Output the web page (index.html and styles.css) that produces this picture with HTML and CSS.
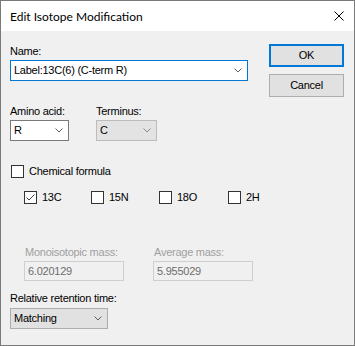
FILE: index.html
```html
<!DOCTYPE html>
<html>
<head>
<meta charset="utf-8">
<link rel="stylesheet" href="styles.css">
</head>
<body>
<div class="window">
  <div class="titlebar">
    <span class="title">Edit Isotope Modification</span>
    <svg class="close" width="10" height="10" viewBox="0 0 10 10"><path d="M0.5 0.5 L9.5 9.5 M9.5 0.5 L0.5 9.5" stroke="#000" stroke-width="1" fill="none"/></svg>
  </div>
  <div class="client">
    <div class="main">
      <div class="lbl name-lbl">Name:</div>
      <div class="combo combo-name"><span>Label:13C(6) (C-term R)</span><svg class="chev" width="8" height="5" viewBox="0 0 8 5"><path d="M0.5 0.5 L4 4 L7.5 0.5" stroke="#606060" fill="none"/></svg></div>
      <div class="aa-row">
        <div class="field">
          <div class="lbl">Amino acid:</div>
          <div class="combo combo-aa"><span>R</span><svg class="chev" width="8" height="5" viewBox="0 0 8 5"><path d="M0.5 0.5 L4 4 L7.5 0.5" stroke="#606060" fill="none"/></svg></div>
        </div>
        <div class="field">
          <div class="lbl">Terminus:</div>
          <div class="combo combo-term"><span>C</span><svg class="chev" width="8" height="5" viewBox="0 0 8 5"><path d="M0.5 0.5 L4 4 L7.5 0.5" stroke="#8a8a8a" fill="none"/></svg></div>
        </div>
      </div>
      <div class="check chem"><span class="box"></span><span>Chemical formula</span></div>
      <div class="isotopes">
        <div class="check"><span class="box"><svg width="11" height="11" viewBox="0 0 11 11"><path d="M1.5 5.5 L4 8 L9.5 2.5" stroke="#444" fill="none"/></svg></span><span>13C</span></div>
        <div class="check"><span class="box"></span><span>15N</span></div>
        <div class="check"><span class="box"></span><span>18O</span></div>
        <div class="check"><span class="box"></span><span>2H</span></div>
      </div>
      <div class="masses">
        <div class="mass">
          <div class="lbl">Monoisotopic mass:</div>
          <div class="tb">6.020129</div>
        </div>
        <div class="mass">
          <div class="lbl">Average mass:</div>
          <div class="tb">5.955029</div>
        </div>
      </div>
      <div class="lbl rt-lbl">Relative retention time:</div>
      <div class="combo combo-rt"><span>Matching</span><svg class="chev" width="8" height="5" viewBox="0 0 8 5"><path d="M0.5 0.5 L4 4 L7.5 0.5" stroke="#606060" fill="none"/></svg></div>
    </div>
    <div class="buttons">
      <div class="btn btn-ok">OK</div>
      <div class="btn">Cancel</div>
    </div>
  </div>
</div>
</body>
</html>
```
FILE: styles.css
```css
body {
  margin: 0;
}
.window {
  width: 355px;
  height: 346px;
  box-sizing: border-box;
  border: 1px solid #7a7a7a;
  background: #f0f0f0;
  font-family: "Liberation Sans", Arial, sans-serif;
  font-size: 11px;
  letter-spacing: -0.25px;
  color: #000;
  display: flex;
  flex-direction: column;
}
.titlebar {
  height: 30px;
  flex: none;
  background: #fff;
  display: flex;
  align-items: center;
  justify-content: space-between;
  padding: 0 10px 0 9px;
}
.title {
  font-family: Lato, "Liberation Sans", sans-serif;
  font-size: 12px;
  letter-spacing: 0;
  line-height: 14px;
  padding-top: 1px;
}
.close {
  display: block;
}
.client {
  display: flex;
  align-items: flex-start;
  padding: 13px 0 0 9px;
}
.main {
  width: 238px;
  display: flex;
  flex-direction: column;
  align-items: flex-start;
}
.lbl {
  line-height: 13px;
  height: 13px;
  white-space: nowrap;
}
.name-lbl {
  margin-top: 1px;
  margin-bottom: 2px;
}
.combo {
  box-sizing: border-box;
  height: 21px;
  border: 1px solid #7a7a7a;
  background: #fff;
  display: flex;
  align-items: center;
  justify-content: space-between;
  padding: 0 5px 0 3px;
  line-height: 13px;
  white-space: nowrap;
}
.chev {
  display: block;
  flex: none;
}
.combo-name {
  width: 238px;
  border-color: #0078d7;
}
.aa-row {
  display: grid;
  grid-template-columns: 86px auto;
  margin-top: 24px;
}
.field .lbl {
  margin-bottom: 2px;
}
.combo-aa {
  width: 59px;
}
.combo-term {
  width: 61px;
  background: #e3e3e3;
  border-color: #bcbcbc;
}
.check {
  display: flex;
  align-items: center;
  gap: 5px;
  height: 13px;
  line-height: 13px;
  white-space: nowrap;
}
.box {
  width: 13px;
  height: 13px;
  box-sizing: border-box;
  border: 1px solid #333;
  background: #fff;
  flex: none;
}
.box svg {
  display: block;
}
.chem {
  margin-top: 24px;
  margin-left: 1px;
}
.isotopes {
  display: grid;
  grid-template-columns: 67px 68px 69px auto;
  margin-top: 13px;
  padding-left: 14px;
}
.masses {
  display: grid;
  grid-template-columns: 129px 100px;
  margin-top: 42px;
  padding-left: 14px;
}
.mass .lbl {
  color: #a0a0a0;
  padding-left: 1px;
  margin-bottom: 2px;
}
.tb {
  box-sizing: border-box;
  width: 100px;
  height: 20px;
  border: 1px solid #cfcfcf;
  padding-left: 3px;
  color: #6d6d6d;
  line-height: 18px;
}
.rt-lbl {
  margin-top: 11px;
  margin-bottom: 3px;
}
.combo-rt {
  width: 98px;
  background: #e1e1e1;
  border-color: #adadad;
}
.buttons {
  margin-left: 21px;
  display: flex;
  flex-direction: column;
  gap: 7px;
}
.btn {
  box-sizing: border-box;
  width: 75px;
  height: 23px;
  border: 1px solid #adadad;
  background: #e1e1e1;
  display: flex;
  align-items: center;
  justify-content: center;
  line-height: 13px;
}
.btn-ok {
  border: 2px solid #0078d7;
}
```
